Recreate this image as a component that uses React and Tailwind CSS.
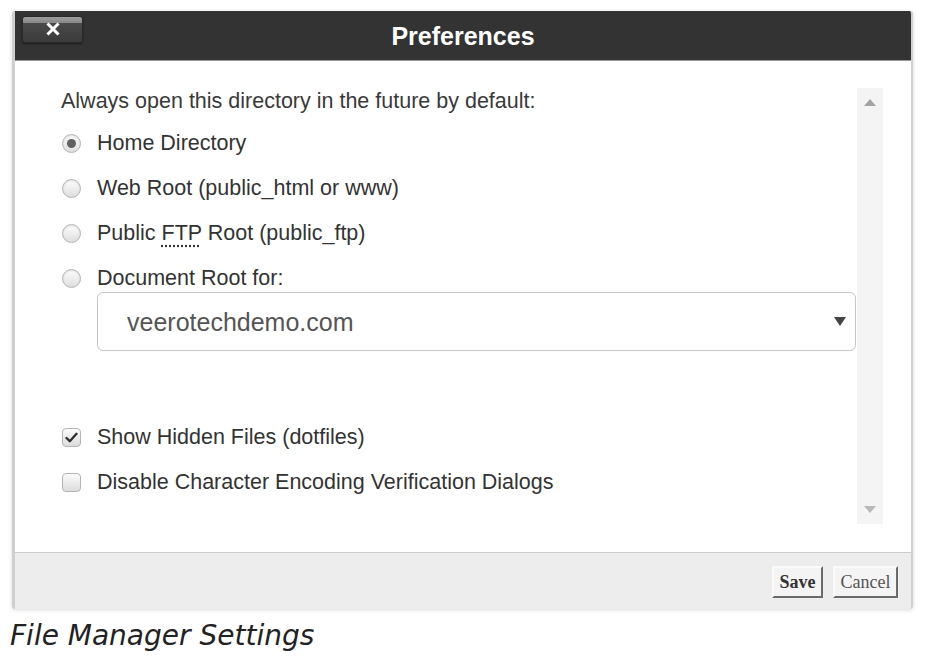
import React from 'react';

const Radio = ({ checked }) => (
  <span className="w-[19px] h-[19px] shrink-0 rounded-full border border-[#b5b5b5] bg-[linear-gradient(#fdfdfd,#dedede)] shadow-[inset_0_1px_2px_rgba(0,0,0,0.12)] flex items-center justify-center">
    {checked && <span className="w-[9px] h-[9px] rounded-full bg-[#606060]" />}
  </span>
);

const Checkbox = ({ checked }) => (
  <span className="w-[19px] h-[19px] shrink-0 rounded-[4px] border border-[#b5b5b5] bg-[linear-gradient(#fbfbfb,#dcdcdc)] flex items-center justify-center">
    {checked && (
      <svg width="13" height="11" viewBox="0 0 13 11">
        <path d="M1.5 6 L4.8 9.2 L11.5 1.8" fill="none" stroke="#2f2f2f" strokeWidth="2.4" strokeLinecap="round" strokeLinejoin="round" />
      </svg>
    )}
  </span>
);

const Row = ({ children, control }) => (
  <label className="h-[30px] flex items-center gap-[16px] pl-[1px]">
    {control}
    <span>{children}</span>
  </label>
);

export default function App() {
  return (
    <div className="w-[932px] h-[660px] bg-white pt-[11px] pl-[12px] font-['Liberation_Sans',Arial,sans-serif]">
      {/* dialog */}
      <div className="w-[901px] h-[598px] flex flex-col border-l-[3px] border-r-[2px] border-[#cfcfcf] shadow-[0_1px_4px_rgba(0,0,0,0.15)] rounded-[3px] overflow-hidden">
        <div className="h-[50px] bg-[#333333] border-b border-[#9a9a9a] flex items-center relative">
          <button className="ml-[7px] w-[61px] h-[27px] rounded-[3px] border border-[#2a2a2a] bg-[linear-gradient(#9c9c9c_0%,#8a8a8a_22%,#4a4a4a_26%,#3a3a3a_100%)] shadow-[0_1px_2px_rgba(0,0,0,0.5)] flex items-center justify-center -mt-[13px] self-center">
            <svg width="14" height="14" viewBox="0 0 14 14">
              <path d="M2.5 2.5 L11.5 11.5 M11.5 2.5 L2.5 11.5" stroke="#fff" strokeWidth="3" strokeLinecap="square" />
            </svg>
          </button>
          <h1 className="absolute left-0 right-0 text-center text-white font-bold text-[25px] pt-[2px] pointer-events-none">Preferences</h1>
        </div>

        <div className="flex-1 flex bg-white pl-[46px] pr-[28px] pt-[27px] pb-[28px]">
          <div className="flex-1 flex flex-col text-[21.5px] text-[#333] leading-[26px]">
            <p className="h-[26px] text-[#3a3a3a]">Always open this directory in the future by default:</p>
            <div className="mt-[14px] flex flex-col gap-[15px]">
              <Row control={<Radio checked />}>Home Directory</Row>
              <Row control={<Radio />}>Web Root (public_html or www)</Row>
              <Row control={<Radio />}>
                Public <abbr className="no-underline [text-decoration:underline_dotted] underline-offset-[5px] decoration-[#555]">FTP</abbr> Root (public_ftp)
              </Row>
              <div className="flex flex-col">
                <Row control={<Radio />}>Document Root for:</Row>
                <div className="ml-[36px] -mt-[1px] mr-[1px] h-[59px] border border-[#c6c6c6] rounded-[6px] flex items-center pl-[29px] pr-[9px] text-[25px] text-[#555]">
                  <span className="flex-1">veerotechdemo.com</span>
                  <svg width="12" height="10" viewBox="0 0 12 10">
                    <path d="M0 0 H12 L6 9 Z" fill="#444" />
                  </svg>
                </div>
              </div>
            </div>
            <div className="mt-[71px] flex flex-col gap-[15px]">
              <Row control={<Checkbox checked />}>Show Hidden Files (dotfiles)</Row>
              <Row control={<Checkbox />}>Disable Character Encoding Verification Dialogs</Row>
            </div>
          </div>
          <div className="w-[26px] bg-[#f4f4f4] flex flex-col justify-between items-center py-[11px]">
            <svg width="12" height="7" viewBox="0 0 12 7"><path d="M6 0 L12 7 H0 Z" fill="#a3a3a3" /></svg>
            <svg width="12" height="7" viewBox="0 0 12 7"><path d="M0 0 H12 L6 7 Z" fill="#b8b8b8" /></svg>
          </div>
        </div>

        <div className="h-[57px] bg-[#ededed] border-t border-[#cccccc] flex items-center justify-end gap-[10px] pr-[13px] pt-[2px] font-['Liberation_Serif','Times_New_Roman',serif] text-[18px]">
          <button className="h-[32px] w-[51px] bg-[#f4f4f4] border-2 border-t-[#fafafa] border-l-[#fafafa] border-b-[#6a6a6a] border-r-[#6a6a6a] font-bold text-[#333]">Save</button>
          <button className="h-[32px] w-[65px] bg-[#f4f4f4] border-2 border-t-[#fafafa] border-l-[#fafafa] border-b-[#6a6a6a] border-r-[#6a6a6a] text-[#555]">Cancel</button>
        </div>
      </div>

      <p className="mt-[10px] -ml-[2px] italic text-[28px] leading-[34px] text-[#222] font-['DejaVu_Sans',sans-serif]">File Manager Settings</p>
    </div>
  );
}
